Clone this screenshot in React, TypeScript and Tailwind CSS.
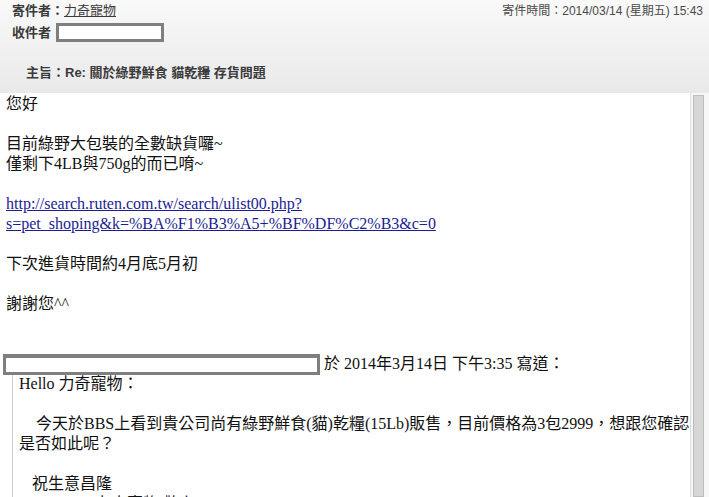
export default function App() {
  const headFont = { fontFamily: '"Liberation Sans", "Noto Sans CJK TC", sans-serif' };
  return (
    <div className="w-[709px] h-[497px] overflow-hidden bg-white flex flex-col">
      {/* Mail header */}
      <div
        className="h-[93px] shrink-0 bg-linear-to-b from-[#f9f9f9] to-[#e9e9e9] text-[13px] leading-[16px] text-[#3a3a3a]"
        style={headFont}
      >
        <div className="flex justify-between pt-[3px] pl-[12px] pr-[6px]">
          <div>
            <span className="font-bold">寄件者：</span>
            <span className="underline">力奇寵物</span>
          </div>
          <div className="text-[12px] text-[#4a4a4a]">寄件時間：2014/03/14 (星期五) 15:43</div>
        </div>
        <div className="flex items-center h-[19px] mt-[4px] pl-[12px]">
          <span className="font-bold">收件者</span>
          <div className="ml-[5px] w-[108px] h-[19px] border-solid border-[3px] border-[#7f7f7f] bg-white" />
        </div>
        <div className="mt-[23px] pl-[26px] font-bold">主旨：Re: 關於綠野鮮食 貓乾糧 存貨問題</div>
      </div>

      {/* Mail body */}
      <div className="flex flex-1 min-h-0">
        <div
          className="flex-1 pl-[6px] pt-[1px] text-[16px] leading-[20px] text-[#111] overflow-hidden"
          style={{ fontFamily: '"Liberation Serif", "Noto Sans CJK TC", serif' }}
        >
          <div>您好</div>
          <div className="h-[20px]" />
          <div>目前綠野大包裝的全數缺貨囉~</div>
          <div>僅剩下4LB與750g的而已唷~</div>
          <div className="h-[20px]" />
          <a className="block text-[#1c1c94] underline" href="#">
            http://search.ruten.com.tw/search/ulist00.php?
            <br />
            s=pet_shoping&amp;k=%BA%F1%B3%A5+%BF%DF%C2%B3&amp;c=0
          </a>
          <div className="h-[20px]" />
          <div>下次進貨時間約4月底5月初</div>
          <div className="h-[20px]" />
          <div>謝謝您^^</div>
          <div className="h-[40px]" />
          <div className="flex items-center h-[20px] -ml-[3px] whitespace-nowrap">
            <div className="w-[317px] h-[21px] shrink-0 border-solid border-[3px] border-t-4 border-[#7f7f7f] bg-white" />
            <span className="ml-[4px]">於 2014年3月14日 下午3:35 寫道：</span>
          </div>
          <div className="ml-[6px] border-l border-[#cccccc] pl-[6px] whitespace-nowrap">
            <div>Hello 力奇寵物：</div>
            <div className="h-[20px]" />
            <div className="pl-[17px]">今天於BBS上看到貴公司尚有綠野鮮食(貓)乾糧(15Lb)販售，目前價格為3包2999，想跟您確認</div>
            <div>是否如此呢？</div>
            <div className="h-[20px]" />
            <div className="pl-[13px]">祝生意昌隆</div>
            <div className="pl-[76px]">力奇寵物 敬上</div>
          </div>
        </div>

        {/* Scrollbar */}
        <div className="w-[19px] shrink-0 border-l border-[#dcdcdc] bg-[#f7f7f7] pt-[2px] pl-[2px] pr-[5px]">
          <div className="h-full border border-[#bdbdbd] bg-[#d6d6d6]" />
        </div>
      </div>
    </div>
  );
}
